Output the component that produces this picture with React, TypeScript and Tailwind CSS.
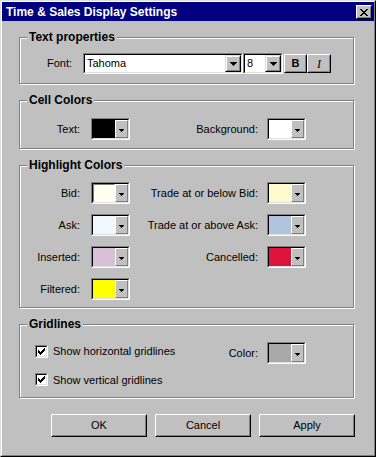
import React from "react";

function Arrow({ big }: { big?: boolean }) {
  return big ? (
    <svg width="7" height="4" viewBox="0 0 7 4" shapeRendering="crispEdges">
      <path d="M0 0h7v1h-1v1h-1v1h-1v1h-1v-1h-1v-1h-1v-1h-1z" fill="#000" />
    </svg>
  ) : (
    <svg width="5" height="3" viewBox="0 0 5 3" shapeRendering="crispEdges">
      <path d="M0 0h5v1h-1v1h-1v1h-1v-1h-1v-1h-1z" fill="#000" />
    </svg>
  );
}

function Swatch({ color, focus }: { color: string; focus?: boolean }) {
  return (
    <div className="flex h-[22px] w-[39px] shrink-0 border border-t-[#808080] border-l-[#808080] border-r-white border-b-white">
      <div className="flex flex-1 border border-t-black border-l-black border-r-[#dfdfdf] border-b-[#dfdfdf]">
        <div
          className={`flex-1 ${color} ${
            focus ? "border border-t-[#808080] border-l-[#808080] border-r-white border-b-white" : ""
          }`}
        />
        <div className="flex w-[13px] items-center justify-center border border-t-white border-l-white border-r-[#808080] border-b-[#808080] bg-[#c0c0c0] pt-[2px]">
          <Arrow />
        </div>
      </div>
    </div>
  );
}

function Combo({ value, width }: { value: string; width: string }) {
  return (
    <div className={`flex h-[21px] ${width} shrink-0 border border-t-[#808080] border-l-[#808080] border-r-white border-b-white`}>
      <div className="flex flex-1 border border-t-black border-l-black border-r-[#dfdfdf] border-b-[#dfdfdf] bg-white">
        <span className="flex-1 pl-[2px] text-[11px] leading-[17px]">{value}</span>
        <div className="flex w-[16px] border border-t-[#dfdfdf] border-l-[#dfdfdf] border-r-black border-b-black">
          <div className="flex flex-1 items-center justify-center border border-t-white border-l-white border-r-[#808080] border-b-[#808080] bg-[#c0c0c0]">
            <Arrow big />
          </div>
        </div>
      </div>
    </div>
  );
}

function Group({
  title,
  height,
  children,
}: {
  title: string;
  height: string;
  children: React.ReactNode;
}) {
  return (
    <div className={`relative ${height} w-[335px] border border-[#808080] shadow-[inset_1px_1px_0_#fff,1px_1px_0_#fff]`}>
      <span className="absolute -top-[8px] left-[7px] bg-[#c0c0c0] px-[2px] text-[12px] font-bold leading-[14px]">
        {title}
      </span>
      {children}
    </div>
  );
}

function Check({ label }: { label: string }) {
  return (
    <div className="flex items-center">
      <div className="h-[13px] w-[13px] border border-t-[#808080] border-l-[#808080] border-r-white border-b-white">
        <div className="flex h-full w-full items-center justify-center border border-t-black border-l-black border-r-[#dfdfdf] border-b-[#dfdfdf] bg-white">
          <svg width="7" height="7" viewBox="0 0 7 7" shapeRendering="crispEdges">
            <path d="M6 0h1v3h-1v1h-1v1h-1v1h-1v1h-1v-1h-1v-1h-1v-3h1v1h1v1h1v-1h1v-1h1z" fill="#000" />
          </svg>
        </div>
      </div>
      <span className="ml-[5px] text-[11px]">{label}</span>
    </div>
  );
}

function Button({ label }: { label: string }) {
  return (
    <button className="h-[23px] w-[96px] border border-t-white border-l-white border-r-black border-b-black bg-[#c0c0c0] p-0">
      <div className="flex h-full w-full items-center justify-center border border-transparent border-r-[#808080] border-b-[#808080] text-[11px]">
        {label}
      </div>
    </button>
  );
}

function ColorRow({
  left,
  leftColor,
  right,
  rightColor,
  focus,
}: {
  left: string;
  leftColor: string;
  right?: string;
  rightColor?: string;
  focus?: boolean;
}) {
  return (
    <div className="flex items-center text-[11px]">
      <span className="w-[60px] text-right">{left}</span>
      <div className="ml-[11px]">
        <Swatch color={leftColor} focus={focus} />
      </div>
      {right && rightColor && (
        <>
          <span className="w-[128px] text-right">{right}</span>
          <div className="ml-[9px]">
            <Swatch color={rightColor} />
          </div>
        </>
      )}
    </div>
  );
}

export default function App() {
  return (
    <div className="h-[457px] w-[376px] border border-t-[#dfdfdf] border-l-[#dfdfdf] border-r-black border-b-black bg-[#c0c0c0] font-['Liberation_Sans',Arial,sans-serif] text-black">
      <div className="flex h-full flex-col border border-t-white border-l-white border-r-[#808080] border-b-[#808080]">
        <div className="flex h-[19px] items-center justify-between bg-[#000080] pl-[4px] pr-[2px]">
          <span className="text-[12px] font-bold text-white">Time &amp; Sales Display Settings</span>
          <div className="mt-[1px] flex h-[14px] w-[16px] border border-t-white border-l-white border-r-black border-b-black bg-[#c0c0c0]">
            <div className="flex flex-1 items-center justify-center border border-transparent border-r-[#808080] border-b-[#808080]">
              <svg width="8" height="7" viewBox="0 0 8 7" shapeRendering="crispEdges">
                <path
                  d="M0 0h2v1h1v1h2v-1h1v-1h2v1h-1v1h-1v1h-1v1h1v1h1v1h1v1h-2v-1h-1v-1h-2v1h-1v1h-2v-1h1v-1h1v-1h1v-1h-1v-1h-1v-1h-1z"
                  fill="#000"
                />
              </svg>
            </div>
          </div>
        </div>

        <div className="flex flex-col gap-4 pl-[17px] pt-[16px]">
          <Group title="Text properties" height="h-[47px]">
            <div className="flex items-center pt-[15px] text-[11px]">
              <span className="w-[52px] text-right">Font:</span>
              <div className="ml-[11px]">
                <Combo value="Tahoma" width="w-[160px]" />
              </div>
              <Combo value="8" width="w-[40px]" />
              <button className="ml-[1px] h-[19px] w-[23px] border border-t-white border-l-white border-r-black border-b-black bg-[#c0c0c0] p-0">
                <div className="flex h-full items-center justify-center border border-transparent border-r-[#808080] border-b-[#808080] text-[11px] font-bold">
                  B
                </div>
              </button>
              <button className="h-[19px] w-[24px] border border-t-white border-l-white border-r-black border-b-black bg-[#c0c0c0] p-0">
                <div className="flex h-full items-center justify-center border border-transparent border-r-[#808080] border-b-[#808080] font-['Liberation_Serif',serif] text-[12px] italic">
                  I
                </div>
              </button>
            </div>
          </Group>

          <Group title="Cell Colors" height="h-[49px]">
            <div className="pt-[17px]">
              <ColorRow left="Text:" leftColor="bg-black" right="Background:" rightColor="bg-white" />
            </div>
          </Group>

          <Group title="Highlight Colors" height="h-[143px]">
            <div className="flex flex-col gap-[10px] pt-[16px]">
              <ColorRow left="Bid:" leftColor="bg-[#fffff0]" right="Trade at or below Bid:" rightColor="bg-[#fffacd]" focus />
              <ColorRow left="Ask:" leftColor="bg-[#f0f8ff]" right="Trade at or above Ask:" rightColor="bg-[#b0c4de]" />
              <ColorRow left="Inserted:" leftColor="bg-[#d8bfd8]" right="Cancelled:" rightColor="bg-[#dc143c]" />
              <ColorRow left="Filtered:" leftColor="bg-[#ffff00]" />
            </div>
          </Group>

          <Group title="Gridlines" height="h-[74px]">
            <div className="flex">
              <div className="flex w-[196px] flex-col gap-[12px] pl-[15px] pt-[18px]">
                <Check label="Show horizontal gridlines" />
                <Check label="Show vertical gridlines" />
              </div>
              <div className="flex items-center self-start pt-[17px] text-[11px]">
                <span className="w-[42px] text-right">Color:</span>
                <div className="ml-[9px]">
                  <Swatch color="bg-[#a9a9a9]" />
                </div>
              </div>
            </div>
          </Group>

          <div className="flex w-[336px] justify-end gap-[8px]">
            <Button label="OK" />
            <Button label="Cancel" />
            <Button label="Apply" />
          </div>
        </div>
      </div>
    </div>
  );
}
